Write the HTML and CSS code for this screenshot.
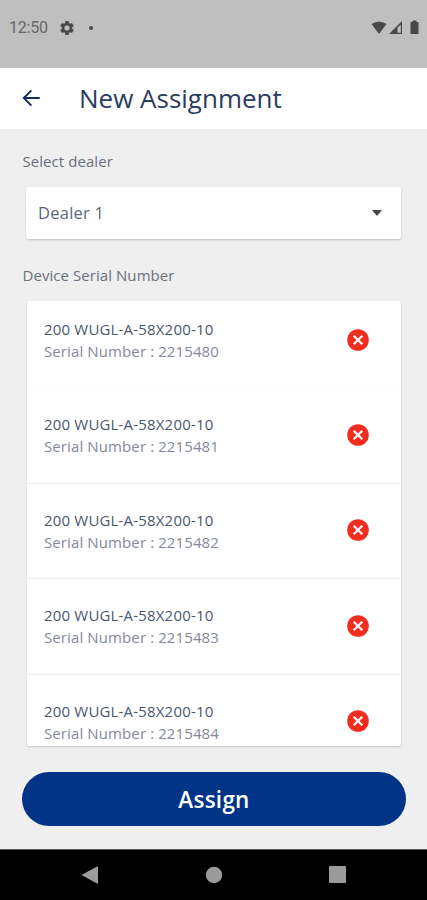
FILE: index.html
```html
<!DOCTYPE html>
<html lang="en">
<head>
<meta charset="utf-8">
<title>New Assignment</title>
<link rel="stylesheet" href="styles.css">
</head>
<body>
<div class="screen">
  <div class="status">
    <span class="clock">12:50</span>
    <svg class="gear" width="16" height="16" viewBox="0 0 24 24"><path fill="#484848" stroke="#484848" stroke-width=".6" fill-rule="evenodd" d="M19.4 13a7.500 7.500 0 0 0 0-2l2.100-1.650a.5.5 0 0 0 .12-.64l-2-3.460a.5.5 0 0 0-.61-.22l-2.490 1a7.300 7.300 0 0 0-1.690-.98l-.38-2.650A.5.5 0 0 0 14 2h-4a.5.5 0 0 0-.49.420l-.38 2.650c-.61.250-1.170.590-1.690.98l-2.490-1a.5.5 0 0 0-.61.220l-2 3.460a.5.500 0 0 0 .12.640L4.570 11a7.900 7.900 0 0 0 0 2l-2.110 1.650a.5.5 0 0 0-.12.640l2 3.460a.5.5 0 0 0 .61.220l2.490-1c.52.400 1.080.730 1.690.98l.38 2.650a.5.500 0 0 0 .49.420h4a.5.500 0 0 0 .49-.42l.38-2.650a7.300 7.300 0 0 0 1.690-.98l2.490 1a.5.5 0 0 0 .61-.22l2-3.460a.5.500 0 0 0-.12-.64zM12 16.200a4.200 4.200 0 1 1 0-8.400 4.200 4.200 0 0 1 0 8.400z"/></svg>
    <span class="dot"></span>
    <svg class="signals" width="50" height="16" viewBox="0 0 50 16" fill="#484848">
      <path d="M0.500 4Q8 -1 15.500 4L8 14z"/>
      <path fill-rule="evenodd" d="M18 14L31 1V14zM26.500 12.800H29.800V4.500L26.500 7.800z"/>
      <path d="M39.500 2H41.500V0.500H45.500V2H47.500V14H39.500z"/>
    </svg>
  </div>
  <header class="bar">
    <svg class="back" width="20" height="20" viewBox="0 0 20 20" fill="none" stroke="#142c5c" stroke-width="1.900"><path d="M18.700 10H3M10.400 2.400L2.800 10L10.400 17.600"/></svg>
    <h1>New Assignment</h1>
  </header>
  <main>
    <div class="label">Select dealer</div>
    <div class="select"><span class="value">Dealer 1</span><span class="caret"></span></div>
    <div class="label second">Device Serial Number</div>
    <div class="list">
      <div class="row"><div><div class="name">200 WUGL-A-58X200-10</div><div class="serial">Serial Number : 2215480</div></div><svg class="remove" viewBox="0 0 22 22"><circle cx="11" cy="11" r="10.800" fill="#f32c20"/><path d="M6.700 6.700l8.600 8.600M15.300 6.700l-8.600 8.600"/></svg></div>
      <div class="row"><div><div class="name">200 WUGL-A-58X200-10</div><div class="serial">Serial Number : 2215481</div></div><svg class="remove" viewBox="0 0 22 22"><circle cx="11" cy="11" r="10.800" fill="#f32c20"/><path d="M6.700 6.700l8.600 8.600M15.300 6.700l-8.600 8.600"/></svg></div>
      <div class="row"><div><div class="name">200 WUGL-A-58X200-10</div><div class="serial">Serial Number : 2215482</div></div><svg class="remove" viewBox="0 0 22 22"><circle cx="11" cy="11" r="10.800" fill="#f32c20"/><path d="M6.700 6.700l8.600 8.600M15.300 6.700l-8.600 8.600"/></svg></div>
      <div class="row"><div><div class="name">200 WUGL-A-58X200-10</div><div class="serial">Serial Number : 2215483</div></div><svg class="remove" viewBox="0 0 22 22"><circle cx="11" cy="11" r="10.800" fill="#f32c20"/><path d="M6.700 6.700l8.600 8.600M15.300 6.700l-8.600 8.600"/></svg></div>
      <div class="row"><div><div class="name">200 WUGL-A-58X200-10</div><div class="serial">Serial Number : 2215484</div></div><svg class="remove" viewBox="0 0 22 22"><circle cx="11" cy="11" r="10.800" fill="#f32c20"/><path d="M6.700 6.700l8.600 8.600M15.300 6.700l-8.600 8.600"/></svg></div>
    </div>
    <button class="assign">Assign</button>
  </main>
  <nav class="nav">
    <svg width="18" height="20" viewBox="0 0 18 20"><path fill="#9b9b9b" d="M0.500 10L17 1V19z"/></svg>
    <svg width="18" height="18" viewBox="0 0 18 18"><circle cx="9" cy="9" r="8.200" fill="#9b9b9b"/></svg>
    <svg width="18" height="18" viewBox="0 0 18 18"><rect x="0" y="0" width="17" height="17" rx="1" fill="#9b9b9b"/></svg>
  </nav>
</div>
</body>
</html>
```

FILE: styles.css
```css
* { box-sizing: border-box; }
body { margin: 0; font-family: "Open Sans", sans-serif; }
.screen { width: 427px; height: 900px; background: #efefef; display: flex; flex-direction: column; overflow: hidden; }
.status { height: 68px; flex: none; background: #bfbfbf; display: flex; align-items: center; padding: 0 4px 13px 9px; }
.clock { font: 400 16px/20px Roboto, sans-serif; color: #666; width: 50px; letter-spacing: -.2px; padding-top: 1px; }
.gear { display: block; }
.dot { width: 4px; height: 4px; border-radius: 50%; background: #484848; margin-left: 14px; }
.signals { display: block; margin-left: auto; margin-right: 2px; }
.bar { height: 61px; flex: none; background: #fff; display: flex; align-items: center; padding-left: 21px; }
.back { display: block; margin: -1px 38px 0 0; }
h1 { margin: 0; font-size: 26px; line-height: 36px; font-weight: 400; color: #2b3c5f; white-space: nowrap; padding-bottom: 2px; }
main { flex: 1; display: flex; flex-direction: column; padding: 22px 21px 22px 22px; min-height: 0; }
.label { font-size: 15px; line-height: 20px; color: #69717d; letter-spacing: .06px; white-space: nowrap; padding-left: .5px; }
.select { height: 52px; flex: none; margin: 16px 5px 0 4px; background: #fff; border-radius: 3px; box-shadow: 0 1px 2px rgba(0,0,0,.18); display: flex; align-items: center; justify-content: space-between; padding: 0 19px 0 12px; font-size: 16.5px; letter-spacing: .25px; color: #5a6777; }
.value { padding-bottom: 2px; }
.caret { border: 5px solid transparent; border-top: 6px solid #454545; border-bottom: 0; }
.second { margin-top: 26px; }
.list { height: 445px; flex: none; margin: 16px 5px 0 5px; background: #fff; border-radius: 2px; box-shadow: 0 1px 2px rgba(0,0,0,.18); overflow: hidden; }
.row { height: 95.6px; display: flex; justify-content: space-between; align-items: flex-start; padding: 25px 32px 0 17px; border-bottom: 1px solid #f1f1f1; }
.row:first-child { height: 87px; padding-top: 17px; border-color: #fcfcfc; }
.name, .serial { font-size: 15px; line-height: 22px; white-space: nowrap; }
.name { color: #4b576c; letter-spacing: .18px; }
.serial { color: #84899a; letter-spacing: .11px; }
.remove { width: 22px; height: 22px; margin-top: 10.6px; fill: none; stroke: #fff; stroke-width: 2.2; }
.remove circle { stroke: none; }
.assign { height: 54px; flex: none; margin-top: 26px; padding: 2px 0 0; border: 0; border-radius: 27px; background: #013386; color: #fff; font: 600 22.5px/30px "Open Sans", sans-serif; letter-spacing: .25px; }
.nav { height: 51px; flex: none; background: #000; display: flex; align-items: center; justify-content: center; gap: 106px; border-top: 1px solid #555; }
```
